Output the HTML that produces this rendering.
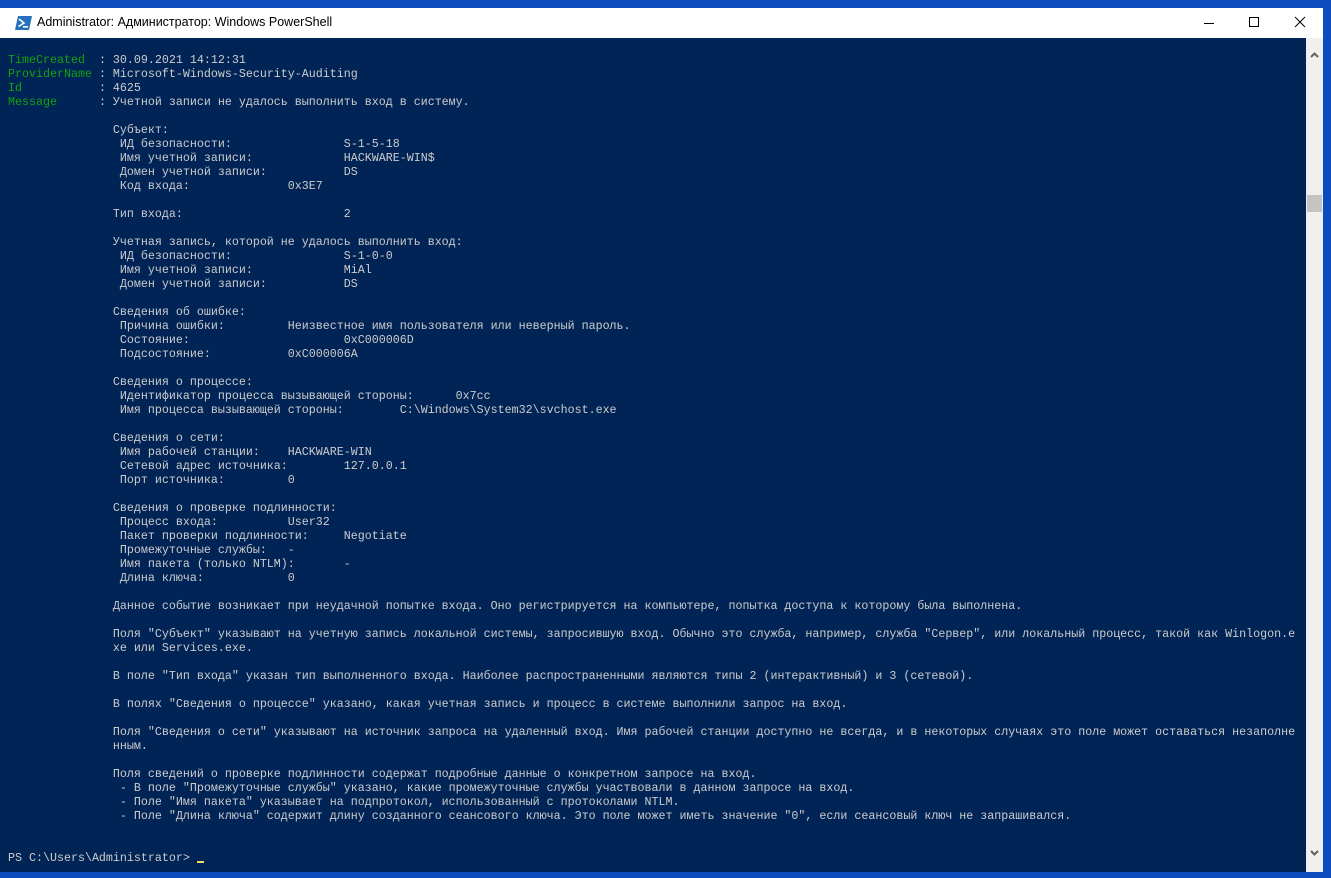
<!DOCTYPE html>
<html><head><meta charset="utf-8"><style>
html,body{margin:0;padding:0;}
body{width:1331px;height:878px;background:#0b4dbf;position:relative;overflow:hidden;}
.win{position:absolute;left:0;top:8px;width:1323px;height:864px;background:#fff;}
.title{position:absolute;left:0;top:0;width:1323px;height:30px;background:#fff;}
.title .t{position:absolute;left:37px;top:7px;font:12.5px "Liberation Sans","DejaVu Sans",sans-serif;color:#000;}
.con{position:absolute;left:0;top:30px;width:1306px;height:834px;background:#012456;overflow:hidden;}
pre{margin:0;position:absolute;left:8px;top:15px;font-family:"Liberation Mono",monospace;font-size:11.6667px;line-height:14px;color:#cccccc;white-space:pre;}
.g{color:#13a10e;}
.cur{display:inline-block;width:7px;height:2px;background:#eedd66;vertical-align:-2px;}
.sb{position:absolute;left:1306px;top:30px;width:17px;height:834px;background:#f0f0f0;}
.thumb{position:absolute;left:1px;top:157px;width:15px;height:17px;background:#c4c4c4;}
</style></head><body>
<div class="win">
 <div class="title">
  <svg style="position:absolute;left:15px;top:8px" width="17" height="14" viewBox="0 0 17 14"><polygon points="3,0 17,0 14,14 0,14" fill="#2671be"/><path d="M4 3 L9 7 L3.5 10.5" stroke="#fff" stroke-width="1.6" fill="none"/><rect x="8" y="10" width="5" height="1.6" fill="#fff"/></svg>
  <div class="t">Administrator: Администратор: Windows PowerShell</div>
  <svg style="position:absolute;left:1202px;top:6px" width="110" height="18" viewBox="0 0 110 18"><line x1="2" y1="9.5" x2="12" y2="9.5" stroke="#000"/><rect x="47.5" y="3.5" width="9" height="9" fill="none" stroke="#000"/><path d="M93 3 L103 13 M103 3 L93 13" stroke="#000" stroke-width="1"/></svg>
 </div>
 <div class="con"><pre><span class="g">TimeCreated  </span>: 30.09.2021 14:12:31
<span class="g">ProviderName </span>: Microsoft-Windows-Security-Auditing
<span class="g">Id           </span>: 4625
<span class="g">Message      </span>: Учетной записи не удалось выполнить вход в систему.

               Субъект:
                ИД безопасности:                S-1-5-18
                Имя учетной записи:             HACKWARE-WIN$
                Домен учетной записи:           DS
                Код входа:              0x3E7

               Тип входа:                       2

               Учетная запись, которой не удалось выполнить вход:
                ИД безопасности:                S-1-0-0
                Имя учетной записи:             MiAl
                Домен учетной записи:           DS

               Сведения об ошибке:
                Причина ошибки:         Неизвестное имя пользователя или неверный пароль.
                Состояние:                      0xC000006D
                Подсостояние:           0xC000006A

               Сведения о процессе:
                Идентификатор процесса вызывающей стороны:      0x7cc
                Имя процесса вызывающей стороны:        C:\Windows\System32\svchost.exe

               Сведения о сети:
                Имя рабочей станции:    HACKWARE-WIN
                Сетевой адрес источника:        127.0.0.1
                Порт источника:         0

               Сведения о проверке подлинности:
                Процесс входа:          User32
                Пакет проверки подлинности:     Negotiate
                Промежуточные службы:   -
                Имя пакета (только NTLM):       -
                Длина ключа:            0

               Данное событие возникает при неудачной попытке входа. Оно регистрируется на компьютере, попытка доступа к которому была выполнена.

               Поля "Субъект" указывают на учетную запись локальной системы, запросившую вход. Обычно это служба, например, служба "Сервер", или локальный процесс, такой как Winlogon.e
               xe или Services.exe.

               В поле "Тип входа" указан тип выполненного входа. Наиболее распространенными являются типы 2 (интерактивный) и 3 (сетевой).

               В полях "Сведения о процессе" указано, какая учетная запись и процесс в системе выполнили запрос на вход.

               Поля "Сведения о сети" указывают на источник запроса на удаленный вход. Имя рабочей станции доступно не всегда, и в некоторых случаях это поле может оставаться незаполне
               нным.

               Поля сведений о проверке подлинности содержат подробные данные о конкретном запросе на вход.
                - В поле "Промежуточные службы" указано, какие промежуточные службы участвовали в данном запросе на вход.
                - Поле "Имя пакета" указывает на подпротокол, использованный с протоколами NTLM.
                - Поле "Длина ключа" содержит длину созданного сеансового ключа. Это поле может иметь значение "0", если сеансовый ключ не запрашивался.


PS C:\Users\Administrator&gt; <span class="cur"></span></pre></div>
 <div class="sb">
  <svg style="position:absolute;left:4px;top:14px" width="9" height="6" viewBox="0 0 9 6"><path d="M1 5 L4.5 1.5 L8 5" stroke="#606060" stroke-width="2" fill="none"/></svg>
  <div class="thumb"></div>
  <svg style="position:absolute;left:4px;top:812px" width="9" height="6" viewBox="0 0 9 6"><path d="M1 1 L4.5 4.5 L8 1" stroke="#606060" stroke-width="2" fill="none"/></svg>
 </div>
</div>
</body></html>
